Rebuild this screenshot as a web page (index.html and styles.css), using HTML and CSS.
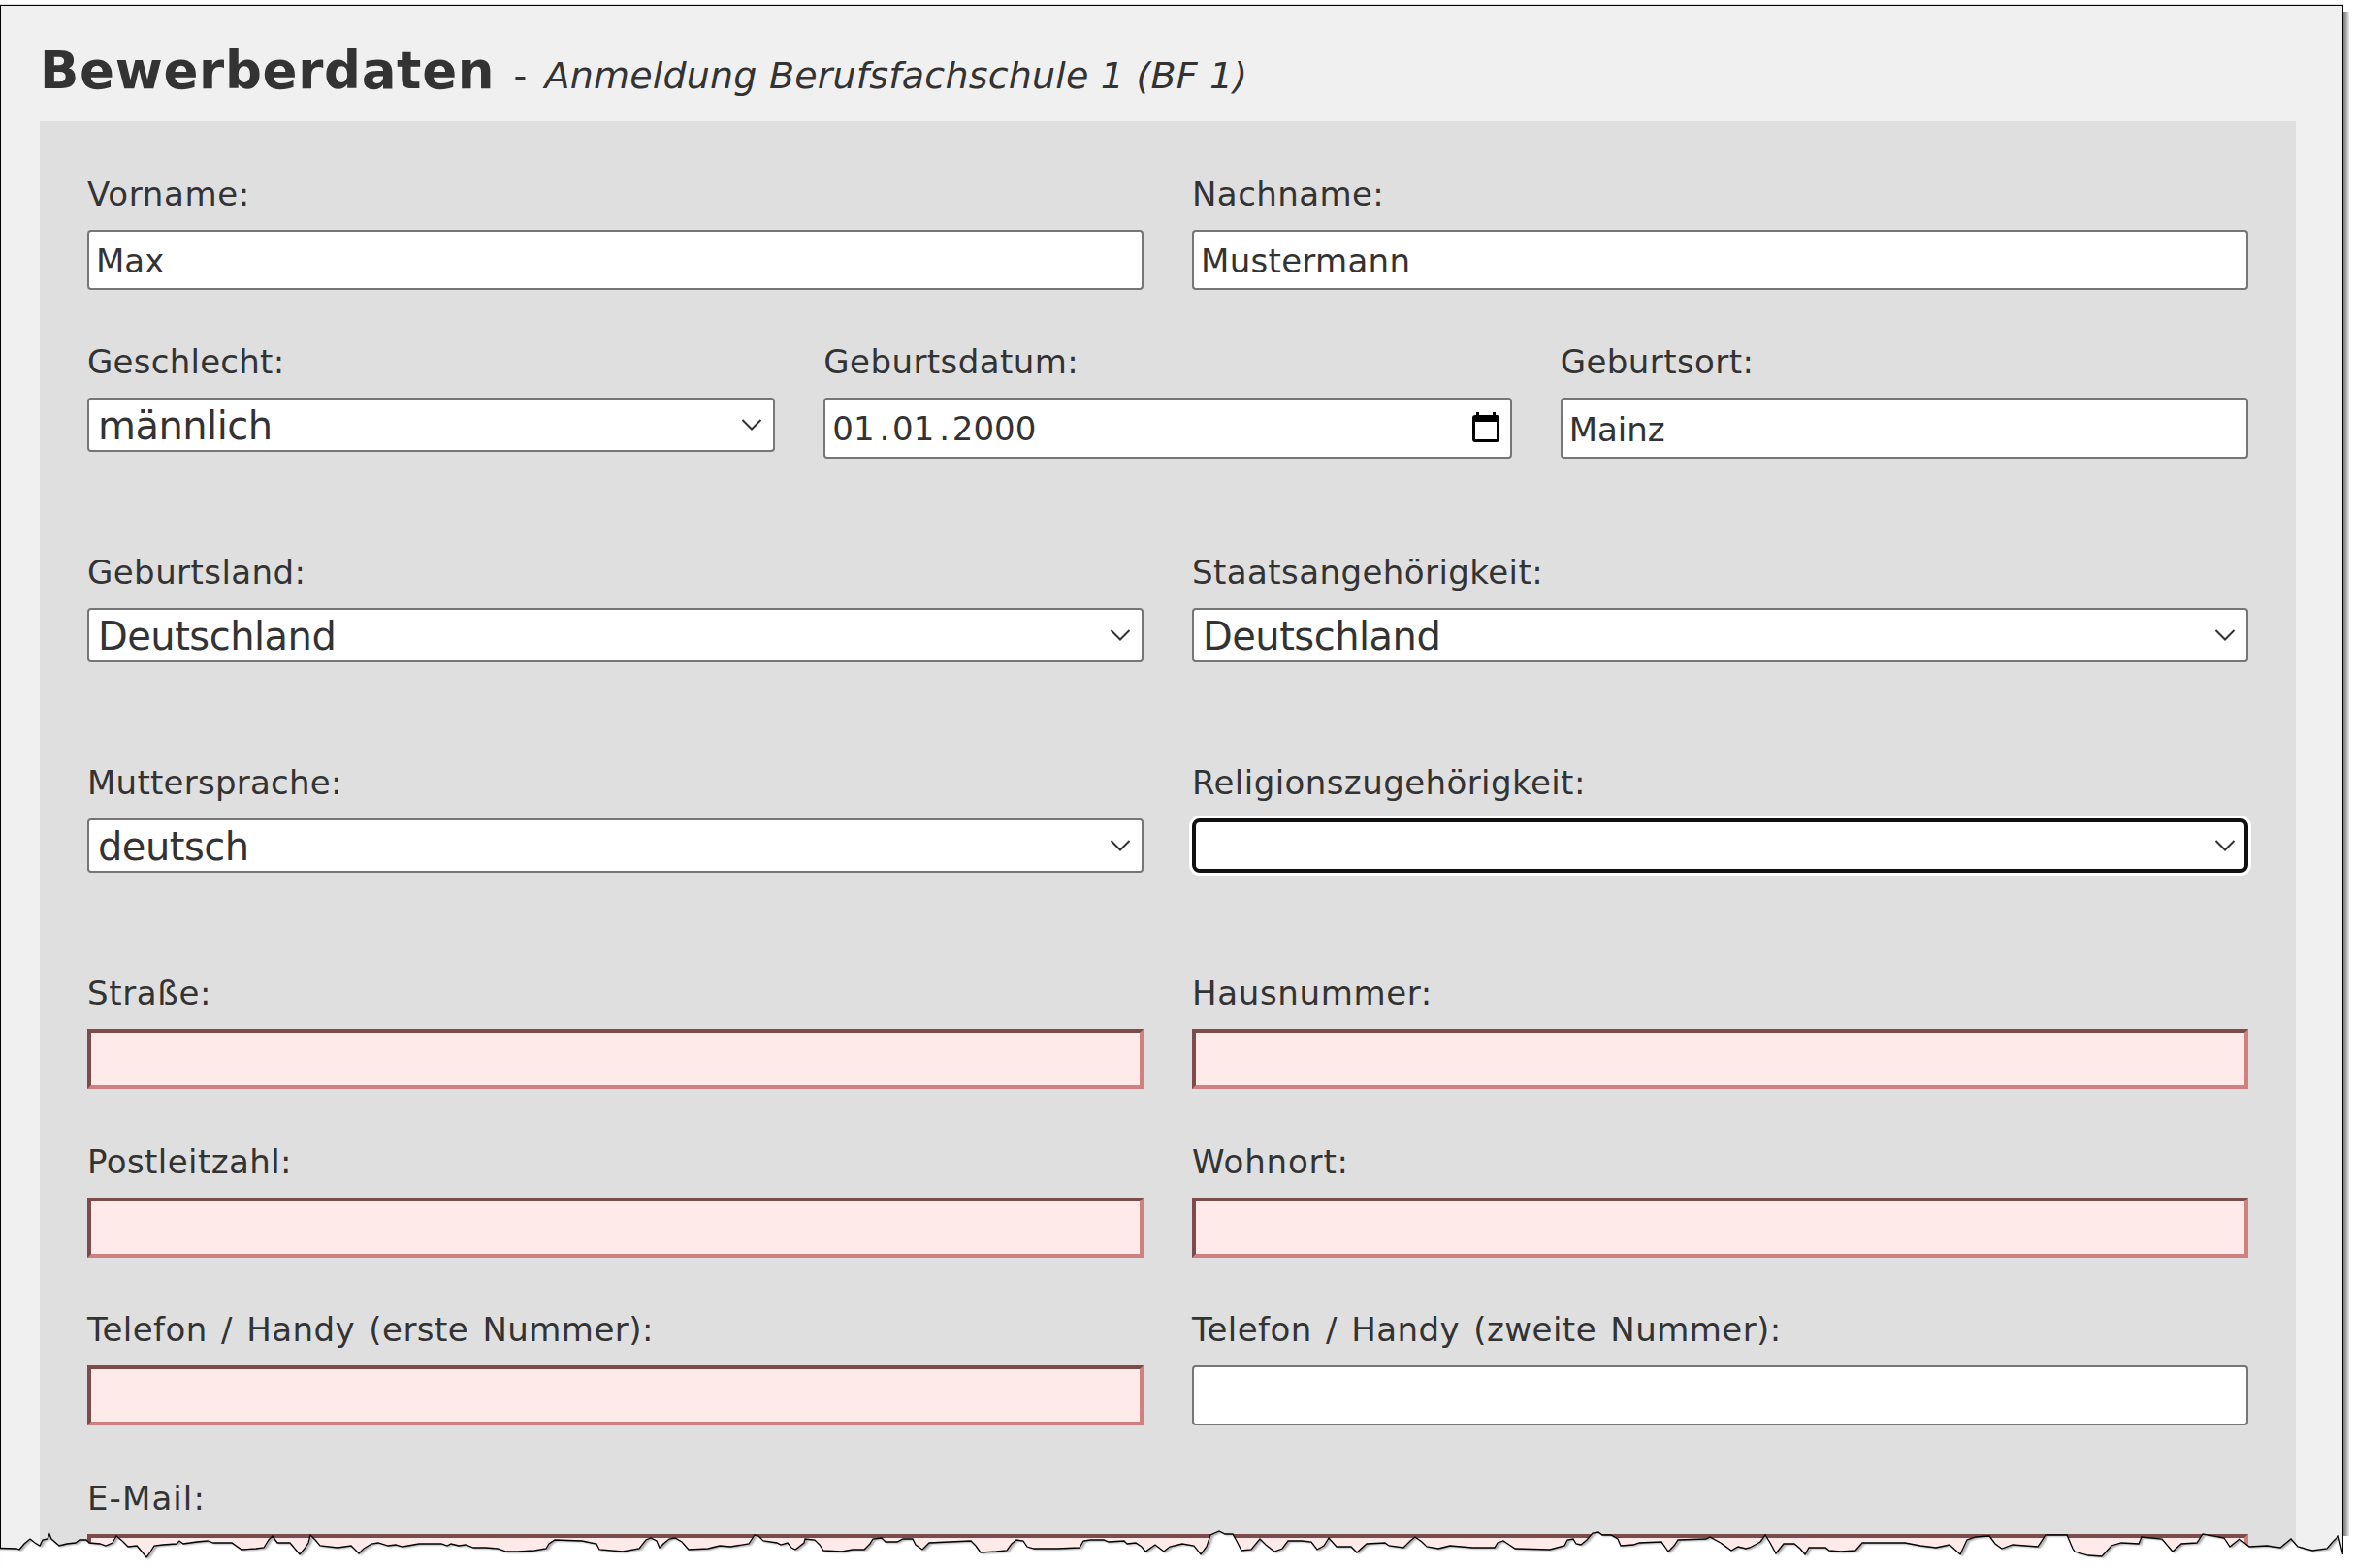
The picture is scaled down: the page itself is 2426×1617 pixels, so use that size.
FILE: index.html
```html
<!DOCTYPE html>
<html lang="de">
<head>
<meta charset="utf-8">
<title>Bewerberdaten</title>
<link rel="stylesheet" href="styles.css">
</head>
<body>
<svg class="defs" width="0" height="0"><defs>
  <symbol id="chevron" viewBox="0 0 22 14"><path d="M1.5 2 11 11.5 20.500 2" fill="none" stroke="#333" stroke-width="2"/></symbol>
</defs></svg>
<main class="sheet">
  <h1 class="title">Bewerberdaten <small class="subtitle"><span class="dash">-</span> <em>Anmeldung Berufsfachschule 1 (BF 1)</em></small></h1>
  <form class="panel">
    <div class="row two names">
      <label class="field"><span class="label wide">Vorname:</span><input class="control" value="Max"></label>
      <label class="field"><span class="label">Nachname:</span><input class="control mid" value="Mustermann"></label>
    </div>
    <div class="row three selects">
      <div class="field"><span class="label tight">Geschlecht:</span><div class="control select"><span>männlich</span><svg class="chevron"><use href="#chevron"/></svg></div></div>
      <div class="field"><span class="label">Geburtsdatum:</span><div class="control tall date"><span>01<span class="dot">.</span>01<span class="dot">.</span>2000</span><svg class="calendar" viewBox="0 0 28 31"><path fill="#000" fill-rule="evenodd" d="M4 0h3v3h14V0h3v3h1q3 0 3 3v22q0 3-3 3H3q-3 0-3-3V6q0-3 3-3h1zM3 10v18h22V10z"/></svg></div></div>
      <label class="field"><span class="label">Geburtsort:</span><input class="control tall" value="Mainz"></label>
    </div>
    <div class="row two selects">
      <div class="field"><span class="label">Geburtsland:</span><div class="control select"><span>Deutschland</span><svg class="chevron"><use href="#chevron"/></svg></div></div>
      <div class="field"><span class="label">Staatsangehörigkeit:</span><div class="control select"><span>Deutschland</span><svg class="chevron"><use href="#chevron"/></svg></div></div>
    </div>
    <div class="row two selects">
      <div class="field"><span class="label tight">Muttersprache:</span><div class="control select"><span>deutsch</span><svg class="chevron"><use href="#chevron"/></svg></div></div>
      <div class="field"><span class="label">Religionszugehörigkeit:</span><div class="control select focused"><span></span><svg class="chevron"><use href="#chevron"/></svg></div></div>
    </div>
    <div class="row two">
      <label class="field"><span class="label wide">Straße:</span><input class="control missing"></label>
      <label class="field"><span class="label wide">Hausnummer:</span><input class="control missing"></label>
    </div>
    <div class="row two">
      <label class="field"><span class="label">Postleitzahl:</span><input class="control missing"></label>
      <label class="field"><span class="label wider">Wohnort:</span><input class="control missing"></label>
    </div>
    <div class="row two">
      <label class="field"><span class="label phrase">Telefon / Handy (erste Nummer):</span><input class="control missing"></label>
      <label class="field"><span class="label phrase">Telefon / Handy (zweite Nummer):</span><input class="control"></label>
    </div>
    <div class="row">
      <label class="field"><span class="label widest">E-Mail:</span><input class="control missing"></label>
    </div>
  </form>
</main>
<div class="side-shadow"></div>
<svg class="tear" viewBox="0 1570 2426 47">
  <defs>
    <path id="edge" d="M0 1596.500 17 1597 20 1598 25 1592 31 1587 36 1591 41 1594 44 1588 49 1587 51 1582 53 1587 61 1594 69 1592 78 1591 82 1588 89 1588 92 1591 103 1592 109 1594 116 1591 120 1584 126 1589 132 1595 141 1594 147 1601 151 1606 154 1602 159 1594 168 1593 182 1592 185 1589 189 1592 203 1590 214 1589 220 1591 239 1591 249 1598 264 1597 272 1596 277 1588 281 1584 286 1591 299 1591 304 1597 309 1603 314 1597 318 1591 320 1583 325 1588 330 1594 348 1596 362 1594 370 1602 375 1597 383 1592 390 1591 400 1594 408 1593 415 1595 432 1592 455 1592 461 1594 465 1592 473 1594 480 1593 488 1596 501 1596 513 1597 522 1600 534 1600 551 1599 563 1597 566 1592 572 1588 600 1589 615 1592 618 1598 642 1600 659 1597 666 1588 671 1586 677 1589 680 1596 684 1592 690 1587 696 1586 703 1590 710 1598 730 1597 742 1594 753 1595 772 1592 778 1583 782 1584 787 1589 801 1591 805 1593 812 1591 816 1596 820 1598 829 1591 830 1587 840 1588 845 1593 849 1599 868 1600 879 1598 891 1598 897 1592 900 1587 909 1586 913 1590 925 1590 931 1587 941 1587 944 1593 951 1598 958 1591 979 1590 1001 1589 1006 1594 1011 1601 1027 1600 1038 1599 1043 1592 1048 1588 1055 1589 1059 1595 1066 1597 1090 1597 1113 1596 1117 1589 1124 1588 1138 1588 1143 1590 1159 1589 1162 1592 1171 1591 1177 1595 1181 1600 1191 1593 1200 1600 1206 1595 1219 1592 1231 1594 1238 1603 1244 1595 1248 1583 1257 1579 1263 1582 1271 1582 1276 1591 1280 1599 1290 1598 1299 1587 1305 1593 1314 1600 1322 1597 1328 1589 1342 1589 1352 1590 1358 1598 1365 1594 1370 1586 1378 1595 1393 1595 1399 1601 1409 1592 1428 1591 1432 1594 1447 1596 1454 1589 1459 1585 1466 1590 1471 1595 1483 1597 1495 1594 1518 1596 1541 1596 1544 1591 1550 1589 1556 1593 1562 1597 1598 1598 1613 1594 1616 1588 1622 1587 1625 1592 1630 1593 1636 1588 1642 1581 1648 1580 1652 1583 1661 1583 1668 1587 1671 1594 1684 1593 1690 1591 1713 1590 1720 1600 1726 1594 1730 1588 1759 1587 1763 1585 1774 1591 1785 1599 1792 1595 1800 1597 1804 1596 1815 1590 1820 1583 1825 1591 1831 1602 1839 1592 1850 1592 1856 1597 1861 1603 1865 1596 1882 1596 1886 1599 1898 1600 1913 1599 1920 1591 1964 1591 1980 1594 1996 1596 2010 1593 2021 1603 2028 1588 2037 1585 2051 1584 2057 1592 2064 1597 2075 1593 2101 1595 2109 1583 2131 1583 2137 1597 2139 1600 2153 1604 2167 1605 2177 1594 2187 1591 2205 1592 2208 1585 2229 1587 2240 1600 2249 1592 2265 1591 2271 1582 2293 1586 2299 1595 2309 1587 2319 1595 2337 1594 2351 1596 2362 1587 2369 1595 2384 1599 2399 1597 2405 1590 2411 1584 2415.500 1603 2416 1584 2430 1584 2430 1625 -5 1625 -5 1596.500z"/>
    <clipPath id="below"><use href="#edge"/></clipPath>
    <clipPath id="paper"><rect x="0" y="1570" width="2416" height="47"/></clipPath>
    <filter id="soft" x="-1%" y="-20%" width="102%" height="140%"><feGaussianBlur stdDeviation="1.300"/></filter>
  </defs>
  <use href="#edge" fill="#fff"/>
  <g clip-path="url(#below)"><g clip-path="url(#paper)"><use href="#edge" transform="translate(2 0)" fill="none" stroke="#999" stroke-width="2.500" filter="url(#soft)"/></g></g>
  <g clip-path="url(#paper)"><use href="#edge" fill="none" stroke="#000" stroke-width="1.300"/></g>
</svg>
</body>
</html>
```
FILE: styles.css
```css
* { box-sizing: border-box; }
html { overflow: hidden; }
body {
  margin: 0;
  padding-top: 5px;
  height: 1617px;
  overflow: hidden;
  background: #fff;
  color: #333;
  font-family: Verdana, "DejaVu Sans", sans-serif;
}
.defs { position: absolute; }
.sheet {
  width: 2416px;
  height: 1612px;
  padding: 0 48px 0 40px;
  background: #f0f0f0;
  border: 1px solid #000;
  box-shadow: 0 -1px 0 #ddd;
  overflow: hidden;
}
.title {
  display: flex;
  align-items: baseline;
  height: 119px;
  margin: 0;
  padding-top: 36px;
  font-size: 53px;
  line-height: 62px;
  letter-spacing: 0.700px;
  white-space: pre;
}
.subtitle { font-size: 38px; font-weight: 400; margin-left: 0; letter-spacing: 0.180px; }
.dash { margin-right: 6px; }
.panel {
  height: 1500px;
  padding: 49px 49px 0 49px;
  background: #dfdfdf;
}
.row { display: grid; gap: 50px; height: 173.700px; }
.names { height: 173px; }
.two { grid-template-columns: 1fr 1fr; }
.three { grid-template-columns: 1fr 1fr 1fr; }
.selects { height: 217px; }
.field { display: flex; flex-direction: column; min-width: 0; }
.label {
  height: 63px;
  padding-top: 6px;
  flex: none;
  font-size: 34px;
  line-height: 40px;
  letter-spacing: 0.430px;
  white-space: pre;
}
.tight { letter-spacing: 0.250px; }
.wide { letter-spacing: 0.650px; }
.wider { letter-spacing: 0.850px; }
.widest { letter-spacing: 1.100px; }
.phrase { letter-spacing: 0.450px; word-spacing: 3px; }
.control {
  width: 100%;
  height: 62px;
  margin: 0;
  padding: 2px 8px 0 7px;
  border: 2px solid #767676;
  border-radius: 4px;
  outline: 0;
  background: #fff;
  color: #333;
  font-family: inherit;
  font-size: 34px;
}
.mid { letter-spacing: 0.300px; }
.tall { height: 63px; }
.select, .date { display: flex; align-items: center; justify-content: space-between; }
.select { height: 56px; padding: 2px 11px 0 9px; font-size: 40px; line-height: 50px; letter-spacing: -0.520px; }
.chevron { width: 22px; height: 14px; margin-top: -2px; }
.calendar { width: 28px; height: 31px; margin-top: -2px; }
.date { padding: 0 11px 0 7px; }
.dot { padding: 0 2.800px 0 4.900px; }
.focused {
  border: 4px solid #101010;
  border-radius: 8px;
  box-shadow: 0 0 0 3px #fff;
  padding: 2px 9px 0 8px;
}
.missing { border: 4px solid; border-color: #7d4b4b #d08080 #d08080 #7d4b4b; border-radius: 0; background: #ffeaea; }
.side-shadow {
  position: absolute;
  left: 2416px;
  top: 12px;
  width: 6px;
  height: 1575px;
  background: linear-gradient(90deg, #777, #aaa 50%, #eee);
}
.tear { position: absolute; left: 0; top: 1570px; width: 2426px; height: 47px; }
```
